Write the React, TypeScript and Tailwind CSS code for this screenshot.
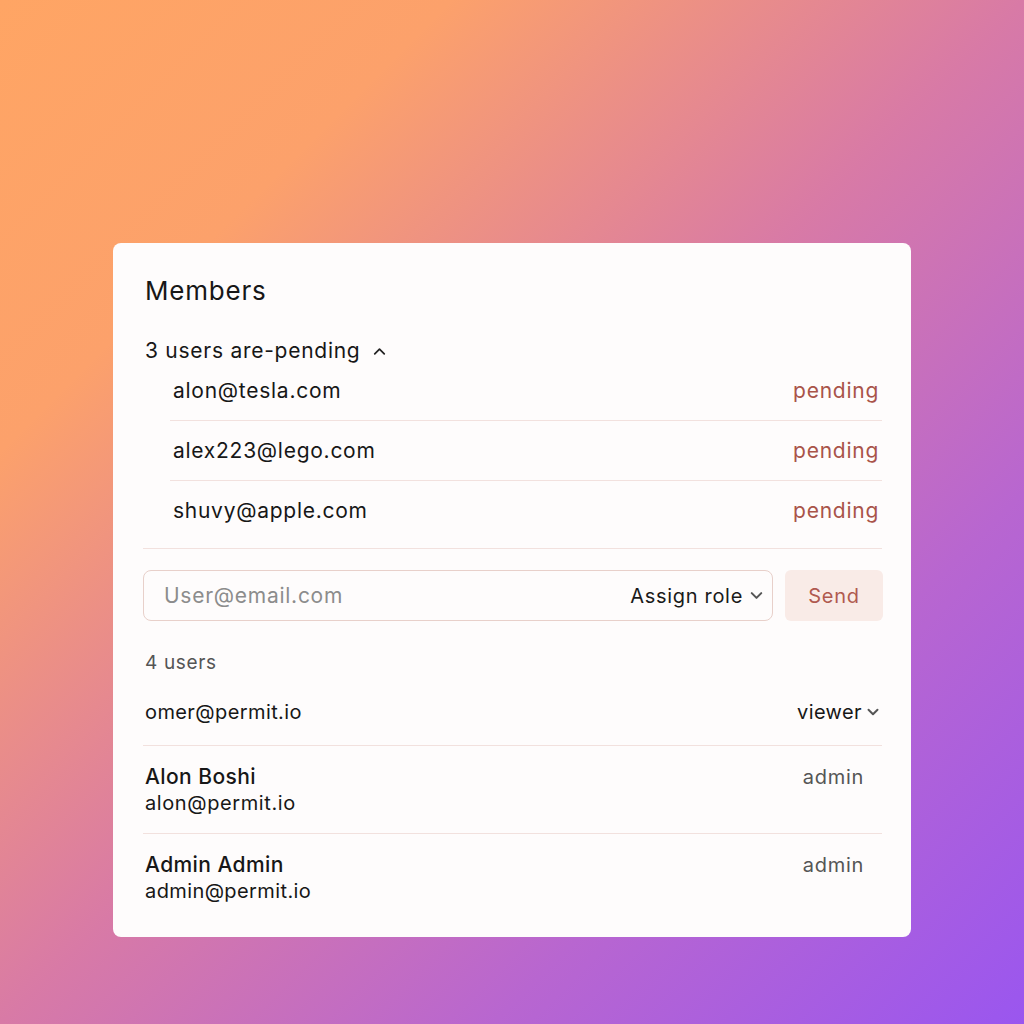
import { ChevronDown, ChevronUp } from "lucide-react";

const pendingUsers = ["alon@tesla.com", "alex223@lego.com", "shuvy@apple.com"];

export default function App() {
  return (
    <div className="w-full h-[1024px] overflow-hidden pt-[243px] pl-[113px] bg-[linear-gradient(135deg,#ffa564_0%,#fca16b_22%,#d87aa6_50%,#b866d0_74%,#9a56ef_100%)] font-['Inter','Noto_Sans',sans-serif] text-[#171717]">
      <div className="w-[798px] h-[694px] bg-[#fefcfc] rounded-lg pt-[32px] pl-[30px] pr-[29px]">
        <h1 className="pl-[2px] text-[26px] leading-8 font-normal tracking-[0.03em]">Members</h1>

        <div className="mt-[33px] pl-[2px] h-[22px] flex items-center gap-[10px] text-[21px] leading-[22px] tracking-[0.035em]">
          <span>3 users are-pending</span>
          <ChevronUp className="w-[19px] h-[19px] text-[#222]" strokeWidth={2.2} />
        </div>

        <div className="border-b border-[#f2e1de] pb-[7px]">
          <div className="ml-[27px]">
            {pendingUsers.map((email, i) => (
              <div
                key={email}
                className={
                  i === 0
                    ? "h-[59px] pl-[3px] pr-[3px] flex items-center justify-between border-b border-[#f2e1de] text-[21px] tracking-[0.035em]"
                    : i === 1
                    ? "h-[60px] pl-[3px] pr-[3px] flex items-center justify-between border-b border-[#f2e1de] text-[21px] tracking-[0.035em]"
                    : "h-[60px] pl-[3px] pr-[3px] flex items-center justify-between text-[21px] tracking-[0.035em]"
                }
              >
                <span>{email}</span>
                <span className="text-[#a9544a]">pending</span>
              </div>
            ))}
          </div>
        </div>

        <div className="mt-[21px] -mr-[1px] flex gap-[12px]">
          <div className="flex-1 h-[51px] flex items-center justify-between border border-[#e8d0ca] rounded-lg pl-[20px] pr-[6px]">
            <span className="text-[21px] text-[#8c8c8c] tracking-[0.035em]">User@email.com</span>
            <div className="flex items-center gap-[4px]">
              <span className="text-[20px] text-[#1a1a1a] tracking-[0.035em]">Assign role</span>
              <ChevronDown className="w-[19px] h-[19px] text-[#555]" strokeWidth={2.6} />
            </div>
          </div>
          <button className="w-[98px] h-[51px] rounded-md bg-[#f9ebe7] text-[20px] tracking-[0.035em] text-[#b0594f]">Send</button>
        </div>

        <div className="mt-[30px] pl-[2px] text-[19px] leading-6 text-[#555] tracking-[0.035em]">4 users</div>

        <div className="pt-[23px] pb-[19px] pl-[2px] border-b border-[#f2e1de] flex items-center justify-between">
          <span className="text-[20px] leading-7 tracking-[0.02em]">omer@permit.io</span>
          <div className="flex items-center gap-[2px]">
            <span className="text-[20px] leading-7 tracking-[0.02em]">viewer</span>
            <ChevronDown className="w-[18px] h-[18px] text-[#555]" strokeWidth={2.6} />
          </div>
        </div>

        <div className="pt-[18px] pb-[17px] pl-[2px] border-b border-[#f2e1de] flex items-start justify-between">
          <div className="flex flex-col">
            <span className="text-[21px] leading-[26px] font-medium tracking-[0.02em]">Alon Boshi</span>
            <span className="text-[20px] leading-[26px] tracking-[0.03em]">alon@permit.io</span>
          </div>
          <span className="text-[20px] leading-[26px] text-[#555] pr-[18px] tracking-[0.035em]">admin</span>
        </div>

        <div className="pt-[18px] pl-[2px] flex items-start justify-between">
          <div className="flex flex-col">
            <span className="text-[21px] leading-[26px] font-medium tracking-[0.02em]">Admin Admin</span>
            <span className="text-[20px] leading-[26px] tracking-[0.02em]">admin@permit.io</span>
          </div>
          <span className="text-[20px] leading-[26px] text-[#555] pr-[18px] tracking-[0.035em]">admin</span>
        </div>
      </div>
    </div>
  );
}
